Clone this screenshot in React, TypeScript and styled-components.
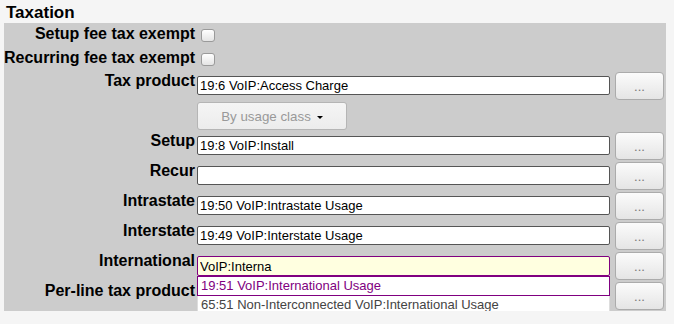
import React from "react";
import styled, { createGlobalStyle } from "styled-components";

const Global = createGlobalStyle`
  html, body { margin: 0; padding: 0; background: #f5f5f5; }
  body { font-family: "Liberation Sans", Arial, sans-serif; color: #000; }
`;

const Page = styled.div`
  padding: 3px 8px 0 4px;
  width: 662px;
`;

const Heading = styled.h2`
  margin: 0 0 0 2px;
  font-size: 17px;
  line-height: 20px;
  font-weight: bold;
`;

const Panel = styled.div`
  background: #cccccc;
  display: flex;
  flex-direction: column;
  gap: 2px;
  padding: 2px 0 1px;
`;

const Row = styled.div<{ $h: number }>`
  display: flex;
  align-items: flex-start;
  height: ${(p) => p.$h}px;
`;

const Label = styled.div`
  width: 191px;
  flex-shrink: 0;
  text-align: right;
  font-size: 16px;
  line-height: 18px;
  font-weight: bold;
  white-space: nowrap;
`;

const Field = styled.div`
  position: relative;
  width: 413px;
  margin-left: 2px;
  padding-top: 4px;
  box-sizing: border-box;
  height: 28px;
`;

const CheckCell = styled.div`
  margin-left: 6px;
  padding-top: 4px;
`;

const Check = styled.input.attrs({ type: "checkbox" })`
  appearance: none;
  display: block;
  margin: 0;
  width: 14px;
  height: 13px;
  border: 1px solid #9a9a9a;
  border-radius: 3px;
  background: linear-gradient(#ffffff, #e4e4e4);
  box-sizing: border-box;
`;

const TextInput = styled.input<{ $active?: boolean }>`
  display: block;
  box-sizing: border-box;
  width: 100%;
  height: ${(p) => (p.$active ? 20 : 19)}px;
  margin: 0;
  padding: 0 2px;
  font-family: "Liberation Sans", Arial, sans-serif;
  font-size: 13px;
  color: #000;
  background: ${(p) => (p.$active ? "#ffffe0" : "#ffffff")};
  border: 1px solid ${(p) => (p.$active ? "#800080" : "#555555")};
  border-radius: 2px;
  outline: none;
`;

const MoreButton = styled.button`
  width: 49px;
  height: 28px;
  margin-left: 5px;
  flex-shrink: 0;
  box-sizing: border-box;
  border: 1px solid #ababab;
  border-radius: 4px;
  background: linear-gradient(#fbfbfb, #e5e5e5);
  color: #777;
  font-family: "Liberation Sans", Arial, sans-serif;
  font-size: 13px;
  padding: 0;
`;

const ClassButton = styled.button`
  width: 150px;
  height: 28px;
  margin-left: 2px;
  box-sizing: border-box;
  border: 1px solid #b5b5b5;
  border-radius: 3px;
  background: linear-gradient(#f5f5f5, #ececec);
  color: #999;
  font-family: "Liberation Sans", Arial, sans-serif;
  font-size: 13.33px;
  display: flex;
  align-items: center;
  justify-content: center;
  padding: 0;
`;

const Caret = styled.span`
  display: inline-block;
  margin-left: 6px;
  margin-top: 3px;
  width: 0;
  height: 0;
  border-left: 3px solid transparent;
  border-right: 3px solid transparent;
  border-top: 3px solid #000;
`;

const Menu = styled.div`
  position: absolute;
  top: 24px;
  left: 0;
  width: 413px;
  box-sizing: border-box;
  background: #fff;
  border: 1px solid #dddddd;
  border-top: none;
  z-index: 2;
`;

const MenuItem = styled.div<{ $active?: boolean }>`
  height: ${(p) => (p.$active ? 20 : 19)}px;
  box-sizing: border-box;
  padding-left: 3px;
  font-size: 13px;
  line-height: 18px;
  color: ${(p) => (p.$active ? "#800080" : "#444")};
  border: ${(p) => (p.$active ? "1px solid #800080" : "none")};
  margin: ${(p) => (p.$active ? "0 -1px" : "0")};
  white-space: nowrap;
`;

type FieldRow = { label: string; value: string };

const rows: FieldRow[] = [
  { label: "Setup", value: "19:8 VoIP:Install" },
  { label: "Recur", value: "" },
  { label: "Intrastate", value: "19:50 VoIP:Intrastate Usage" },
  { label: "Interstate", value: "19:49 VoIP:Interstate Usage" },
];

export default function App() {
  return (
    <Page>
      <Global />
      <Heading>Taxation</Heading>
      <Panel>
        <Row $h={22}>
          <Label>Setup fee tax exempt</Label>
          <CheckCell>
            <Check />
          </CheckCell>
        </Row>
        <Row $h={21}>
          <Label>Recurring fee tax exempt</Label>
          <CheckCell>
            <Check />
          </CheckCell>
        </Row>
        <Row $h={28}>
          <Label>Tax product</Label>
          <Field>
            <TextInput readOnly value="19:6 VoIP:Access Charge" />
          </Field>
          <MoreButton>...</MoreButton>
        </Row>
        <Row $h={28}>
          <Label />
          <ClassButton>
            By usage class
            <Caret />
          </ClassButton>
        </Row>
        {rows.map((r) => (
          <Row $h={28} key={r.label}>
            <Label>{r.label}</Label>
            <Field>
              <TextInput readOnly value={r.value} />
            </Field>
            <MoreButton>...</MoreButton>
          </Row>
        ))}
        <Row $h={28}>
          <Label>International</Label>
          <Field>
            <TextInput $active readOnly value="VoIP:Interna" />
            <Menu>
              <MenuItem $active>19:51 VoIP:International Usage</MenuItem>
              <MenuItem>65:51 Non-Interconnected VoIP:International Usage</MenuItem>
            </Menu>
          </Field>
          <MoreButton>...</MoreButton>
        </Row>
        <Row $h={28}>
          <Label>Per-line tax product</Label>
          <Field>
            <TextInput readOnly value="" />
          </Field>
          <MoreButton>...</MoreButton>
        </Row>
      </Panel>
    </Page>
  );
}
